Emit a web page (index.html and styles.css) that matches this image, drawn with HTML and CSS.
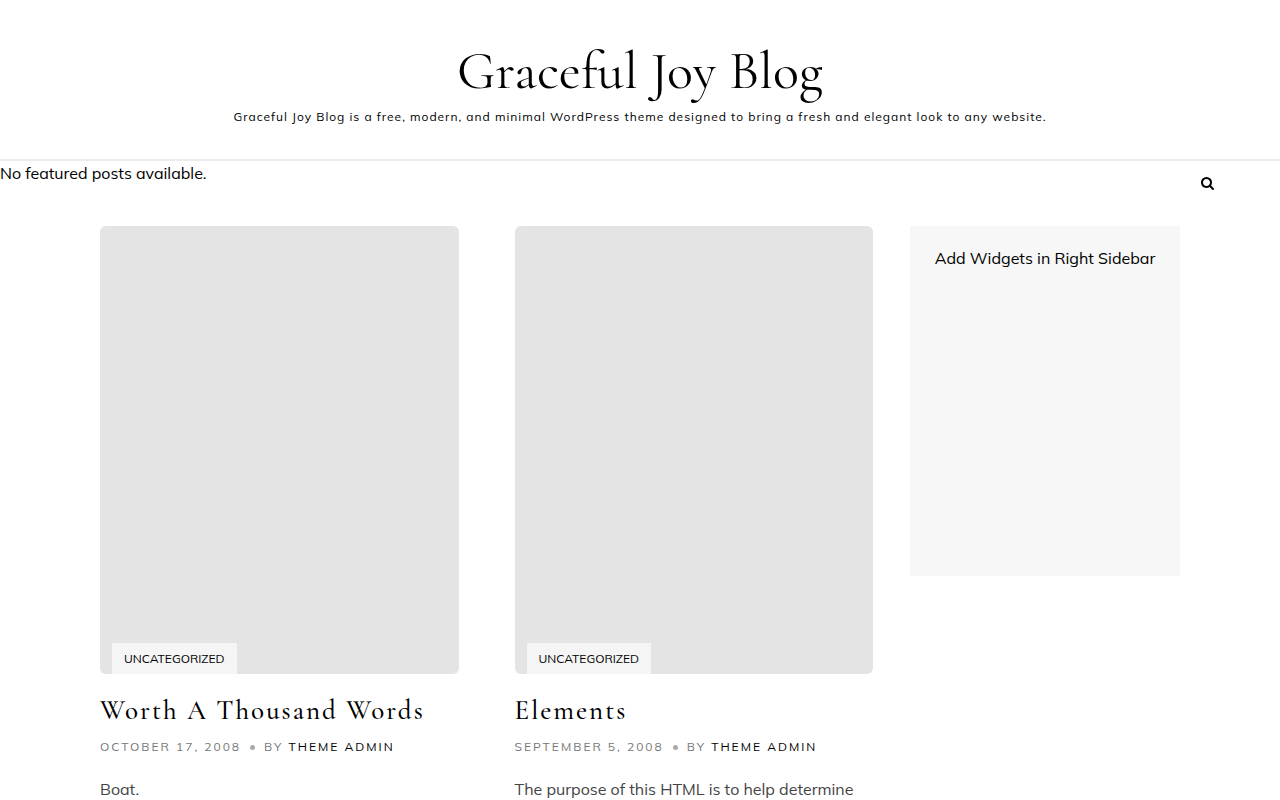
FILE: index.html
```html
<!DOCTYPE html>
<html lang="en">
<head>
    <meta charset="UTF-8">
    <meta name="viewport" content="width=device-width, initial-scale=1.0">
    <title>Graceful Joy Blog</title>
    <link rel="stylesheet" href="styles.css">
</head>
<body>

    <!-- Site Header -->
    <header class="site-header">
        <h1 class="site-title"><a href="#">Graceful Joy Blog</a></h1>
        <p class="site-description">Graceful Joy Blog is a free, modern, and minimal WordPress theme designed to bring a fresh and elegant look to any website.</p>
    </header>

    <!-- Featured Posts and Search -->
    <div class="top-bar">
        <p class="featured">No featured posts available.</p>
        <button type="button" class="search-btn" aria-label="Search">
            <svg viewBox="0 0 1664 1664" width="13" height="13" aria-hidden="true">
                <path d="M1152 704q0-185-131.500-316.500T704 256 387.500 387.500 256 704t131.500 316.500T704 1152t316.500-131.500T1152 704zm512 832q0 52-38 90t-90 38q-54 0-90-38l-343-342q-179 124-399 124-143 0-273.500-55.500t-225-150-150-225T0 704t55.500-273.500 150-225 225-150T704 0t273.500 55.500 225 150 150 225T1408 704q0 220-124 399l343 343q37 37 37 90z"/>
            </svg>
        </button>
    </div>

    <!-- Main Content -->
    <div class="content">
        <main class="posts">
            <article class="post">
                <div class="post-media">
                    <a href="#" class="category">Uncategorized</a>
                </div>
                <h2 class="post-title"><a href="#">Worth A Thousand Words</a></h2>
                <div class="post-meta">
                    <span>October 17, 2008</span>
                    <span class="dot"></span>
                    <span>By <a href="#">Theme Admin</a></span>
                </div>
                <p class="excerpt">Boat.</p>
            </article>

            <article class="post">
                <div class="post-media">
                    <a href="#" class="category">Uncategorized</a>
                </div>
                <h2 class="post-title"><a href="#">Elements</a></h2>
                <div class="post-meta">
                    <span>September 5, 2008</span>
                    <span class="dot"></span>
                    <span>By <a href="#">Theme Admin</a></span>
                </div>
                <p class="excerpt">The purpose of this HTML is to help determine</p>
            </article>
        </main>

        <aside class="sidebar">
            <p>Add Widgets in Right Sidebar</p>
        </aside>
    </div>

</body>
</html>
```
FILE: styles.css
```css
* {
    box-sizing: border-box;
}
body {
    margin: 0;
    font-family: Mulish, Lato, sans-serif;
    font-size: 16px;
    line-height: 25px;
    color: #000;
    background: #fff;
}
h1, h2, p {
    margin: 0;
}
a {
    color: #000;
    text-decoration: none;
}
.site-header {
    padding: 37px 20px 32px;
    text-align: center;
    border-bottom: 2px solid #ececec;
}
.site-title {
    margin-bottom: 3px;
    font-family: "Cormorant Garamond", "Liberation Serif", serif;
    font-size: 54px;
    font-weight: 400;
    line-height: 67px;
}
.site-description {
    font-size: 12px;
    line-height: 20px;
    letter-spacing: 1px;
}
.top-bar {
    display: flex;
    justify-content: space-between;
    align-items: flex-start;
    padding-right: 66px;
}
.search-btn {
    display: flex;
    padding: 16px 0;
    border: none;
    background: none;
    cursor: pointer;
}
.content {
    display: flex;
    align-items: flex-start;
    gap: 37px;
    padding: 20px 100px 0;
}
.posts {
    flex: 1;
    display: grid;
    grid-template-columns: 1fr 1fr;
    gap: 56px;
}
.post-media {
    display: flex;
    align-items: flex-end;
    aspect-ratio: 4 / 5;
    padding-left: 12px;
    border-radius: 6px;
    background: #e4e4e4;
}
.category {
    padding: 6px 12px 5px;
    font-size: 12px;
    line-height: 20px;
    text-transform: uppercase;
    color: #000;
    background: #f5f5f5;
}
.post-title {
    margin-top: 19px;
    font-family: "Cormorant Garamond", "Liberation Serif", serif;
    font-size: 27px;
    font-weight: 500;
    line-height: 36px;
    letter-spacing: 2px;
    white-space: nowrap;
}
.post-meta {
    display: flex;
    align-items: center;
    gap: 9px;
    margin-top: 8px;
    font-size: 12px;
    line-height: 20px;
    letter-spacing: 2px;
    text-transform: uppercase;
    color: #777;
}
.dot {
    width: 5px;
    height: 5px;
    border-radius: 50%;
    background: #aaa;
}
.excerpt {
    margin-top: 20px;
    line-height: 24px;
    color: #444;
}
.sidebar {
    width: 270px;
    min-height: 350px;
    padding: 20px;
    text-align: center;
    background: #f7f7f7;
}
```
